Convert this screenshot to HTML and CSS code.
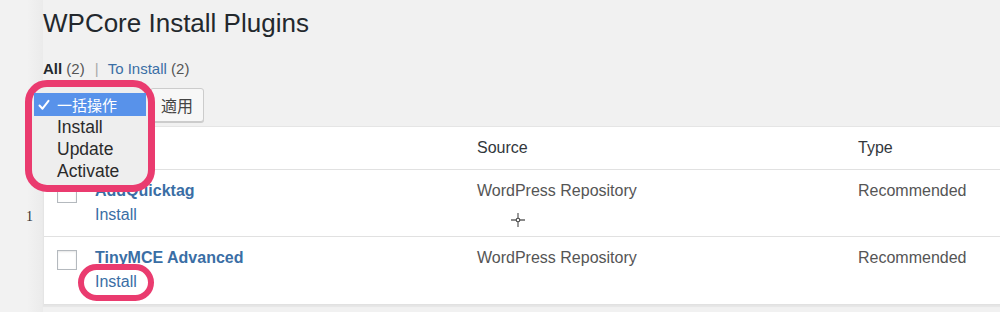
FILE: index.html
```html
<!DOCTYPE html>
<html lang="ja">
<head>
    <meta charset="UTF-8">
    <title>WPCore Install Plugins</title>
    <link rel="stylesheet" href="styles.css">
</head>
<body>
    <div class="page">
        <div class="gutter"><span class="line-no">1</span></div>

        <div class="main">
            <h1>WPCore Install Plugins</h1>

            <div class="subsubsub">
                <a class="current">All <span class="count">(2)</span></a>
                <span class="sep">|</span>
                <a>To Install</a> <span class="count">(2)</span>
            </div>

            <div class="tablenav">
                <div class="bulk-select"></div>
                <button class="button">適用</button>

                <!-- open bulk action menu, circled -->
                <div class="bulk-menu">
                    <div class="menu-item selected">
                        <svg class="check" viewBox="0 0 12 12">
                            <path d="M1.5 6.5l3 3.2L10.5 1.8" fill="none" stroke="#fff" stroke-width="2" stroke-linecap="round" stroke-linejoin="round"/>
                        </svg>一括操作
                    </div>
                    <div class="menu-item">Install</div>
                    <div class="menu-item">Update</div>
                    <div class="menu-item">Activate</div>
                </div>
            </div>

            <div class="plugins">
                <div class="row head">
                    <div class="cell check-col"><span class="checkbox"></span></div>
                    <div class="cell"></div>
                    <div class="cell">Source</div>
                    <div class="cell">Type</div>
                </div>

                <div class="row">
                    <div class="cell check-col"><span class="checkbox"></span></div>
                    <div class="cell">
                        <a class="plugin-name">AddQuicktag</a>
                        <a class="action">Install</a>
                    </div>
                    <div class="cell source">
                        WordPress Repository
                        <svg class="cursor" viewBox="0 0 14 14">
                            <path d="M7 0v5M7 9v5M0 7h5M9 7h5" stroke="#666" stroke-width="1.3"/>
                            <circle cx="7" cy="7" r="1.8" fill="none" stroke="#444" stroke-width="1.1"/>
                        </svg>
                    </div>
                    <div class="cell">Recommended</div>
                </div>

                <div class="row">
                    <div class="cell check-col"><span class="checkbox"></span></div>
                    <div class="cell">
                        <a class="plugin-name">TinyMCE Advanced</a>
                        <a class="action circled">Install</a>
                    </div>
                    <div class="cell source">WordPress Repository</div>
                    <div class="cell">Recommended</div>
                </div>
            </div>
        </div>
    </div>
</body>
</html>
```

FILE: styles.css
```css
*,
*::before,
*::after {
    margin: 0;
    padding: 0;
    box-sizing: border-box;
}

html,
body {
    height: 312px;
    overflow: hidden;
}

body {
    font-family: 'Liberation Sans', Arial, 'Noto Sans CJK JP', sans-serif;
    background: #f1f1f1;
    color: #555;
}

a {
    color: #3a6ea5;
    text-decoration: none;
}

.page {
    display: flex;
    height: 100%;
}

.gutter {
    width: 43px;
    flex-shrink: 0;
    padding: 207px 0 0 26px;
    background: linear-gradient(90deg, #f2f2f2 0, #f2f2f2 27px, #ebebeb 43px);
}

.line-no {
    font-family: 'Liberation Serif', serif;
    font-size: 14px;
    color: #333;
}

.main {
    flex: 1;
    min-width: 0;
}

h1 {
    margin-top: 6px;
    font-size: 26px;
    font-weight: 400;
    line-height: 34px;
    color: #23282d;
}

.subsubsub {
    margin-top: 19px;
    font-size: 15px;
    line-height: 20px;
    color: #555;
}

.subsubsub .current {
    color: #23282d;
    font-weight: 700;
}

.subsubsub .current .count {
    font-weight: 400;
    color: #555;
}

.subsubsub .sep {
    margin: 0 5px 0 6px;
    color: #aaa;
}

/* bulk actions */

.tablenav {
    position: relative;
    display: flex;
    gap: 7px;
    margin-top: 9px;
    height: 34px;
}

.bulk-select {
    width: 100px;
    background: #fff;
    border: 1px solid #ddd;
}

.button {
    width: 54px;
    font-family: 'Noto Sans CJK JP', sans-serif;
    font-size: 16px;
    color: #444;
    background: #f7f7f7;
    border: 1px solid #ccc;
    border-radius: 3px;
    box-shadow: 0 1px 0 #ccc;
}

.bulk-menu {
    position: absolute;
    left: -18px;
    top: -8px;
    width: 130px;
    height: 112px;
    padding: 6px 2px 0;
    background: #eeeeee;
    border: 7px solid #ea3b6f;
    border-radius: 22px;
    z-index: 2;
}

.menu-item {
    height: 22px;
    padding-left: 23px;
    font-size: 17.5px;
    line-height: 22px;
    color: #2a2a2a;
}

.menu-item.selected {
    display: flex;
    align-items: center;
    height: 23px;
    padding-left: 4px;
    background: #5892ea;
    color: #fff;
    font-family: 'Noto Sans CJK JP', sans-serif;
    font-size: 15px;
    line-height: 23px;
}

.menu-item .check {
    width: 12px;
    height: 12px;
    margin-right: 7px;
}

/* plugin table */

.plugins {
    margin-top: 4px;
    margin-right: -10px;
    background: #fff;
    border: 1px solid #e5e5e5;
    box-shadow: 0 1px 1px rgba(0, 0, 0, 0.04);
}

.row {
    display: grid;
    grid-template-columns: 51px 382px 381px 1fr;
    height: 67px;
    border-bottom: 1px solid #e1e1e1;
    font-size: 16px;
    line-height: 24px;
}

.row:last-child {
    height: 68px;
}

.row.head {
    height: 43px;
    align-items: center;
    color: #32373c;
}

.row.head .cell {
    padding-top: 0;
}

.cell {
    padding-top: 9px;
}

.check-col {
    padding: 13px 0 0 13px;
}

.head .check-col {
    padding-top: 0;
}

.checkbox {
    display: block;
    width: 20px;
    height: 20px;
    background: #fff;
    border: 1px solid #b4b9be;
    box-shadow: inset 0 1px 2px rgba(0, 0, 0, 0.1);
}

.plugin-name {
    display: block;
    font-weight: 700;
}

.action {
    position: relative;
}

.action.circled::after {
    content: '';
    position: absolute;
    left: -17px;
    top: -9px;
    width: 76px;
    height: 37px;
    border: 6px solid #ea3b6f;
    border-radius: 19px;
}

.source {
    position: relative;
}

.cursor {
    position: absolute;
    left: 34px;
    top: 43px;
    width: 14px;
    height: 14px;
}
```
